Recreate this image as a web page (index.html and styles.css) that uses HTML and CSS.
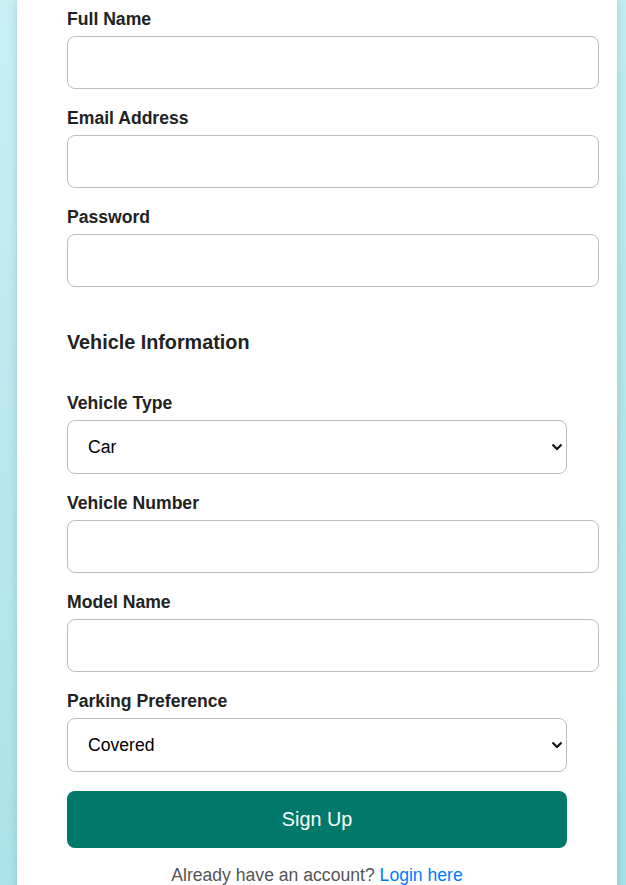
FILE: index.html
```html
<!DOCTYPE html>
<html lang="en">
<head>
<meta charset="utf-8">
<title>Sign Up</title>
<link rel="stylesheet" href="styles.css">
</head>
<body>
<div class="card">
  <form class="form">
    <div class="group">
      <label class="label" for="name">Full Name</label>
      <input class="field" id="name" type="text">
    </div>
    <div class="group">
      <label class="label" for="email">Email Address</label>
      <input class="field" id="email" type="email">
    </div>
    <div class="group">
      <label class="label" for="pw">Password</label>
      <input class="field" id="pw" type="password">
    </div>

    <h3 class="section">Vehicle Information</h3>

    <div class="group">
      <label class="label" for="vtype">Vehicle Type</label>
      <div class="select-wrap">
        <select class="select" id="vtype">
          <option>Car</option>
          <option>Bike</option>
        </select>
        <svg class="chev" width="12" height="8" viewBox="0 0 12 8"><path d="M1.5 1.5 L6 6 L10.5 1.5" fill="none" stroke="#111" stroke-width="2.2"/></svg>
      </div>
    </div>
    <div class="group">
      <label class="label" for="vnum">Vehicle Number</label>
      <input class="field" id="vnum" type="text">
    </div>
    <div class="group">
      <label class="label" for="model">Model Name</label>
      <input class="field" id="model" type="text">
    </div>
    <div class="group">
      <label class="label" for="pref">Parking Preference</label>
      <div class="select-wrap">
        <select class="select" id="pref">
          <option>Covered</option>
          <option>Open</option>
        </select>
        <svg class="chev" width="12" height="8" viewBox="0 0 12 8"><path d="M1.5 1.5 L6 6 L10.5 1.5" fill="none" stroke="#111" stroke-width="2.2"/></svg>
      </div>
    </div>

    <button class="btn" type="button">Sign Up</button>
    <p class="foot">Already have an account? <a class="link" href="#">Login here</a></p>
  </form>
</div>
</body>
</html>
```

FILE: styles.css
```css
html, body {
  margin: 0;
  padding: 0;
}
body {
  min-height: 885px;
  background: linear-gradient(160deg, #c9eff3 0%, #b4e6ec 50%, #a4dde4 100%);
  font-family: "Liberation Sans", Arial, sans-serif;
  overflow: hidden;
}
.card {
  margin-left: 17px;
  width: 500px;
  padding: 9px 50px 40px;
  background: #ffffff;
  min-height: 900px;
  box-shadow: 0 0 8px rgba(0, 80, 90, 0.18);
}
.form {
  margin: 0;
}
.group {
  margin-bottom: 19px;
}
.label {
  display: block;
  font-weight: bold;
  font-size: 17.6px;
  line-height: 20px;
  color: #222;
  margin-bottom: 7px;
}
.field {
  display: block;
  width: 100%;
  padding: 15px;
  font-family: inherit;
  font-size: 17.6px;
  line-height: 21px;
  border: 1px solid #bdbdbd;
  border-radius: 8px;
  background: #fff;
  outline: none;
  margin: 0;
}
.section {
  font-size: 19.8px;
  line-height: 23px;
  font-weight: bold;
  color: #222;
  margin: 44px 0 39px;
}
.select-wrap {
  position: relative;
  width: 500px;
}
.select {
  display: block;
  box-sizing: border-box;
  width: 100%;
  height: 54px;
  padding: 0 20px;
  font-family: inherit;
  font-size: 17.6px;
  color: #000;
  border: 1px solid #bdbdbd;
  border-radius: 8px;
  background: #fff;
  -webkit-appearance: none;
  appearance: none;
  outline: none;
  margin: 0;
}
.chev {
  position: absolute;
  right: 4px;
  top: 23px;
  pointer-events: none;
}
.btn {
  display: block;
  width: 100%;
  height: 57px;
  margin-top: 0;
  border: none;
  border-radius: 8px;
  background: #00796b;
  color: #fff;
  font-family: inherit;
  font-size: 19.8px;
  cursor: pointer;
}
.foot {
  margin: 17px 0 0;
  text-align: center;
  font-size: 17.6px;
  line-height: 20px;
  color: #555;
}
.link {
  color: #007bff;
  text-decoration: none;
}
```
